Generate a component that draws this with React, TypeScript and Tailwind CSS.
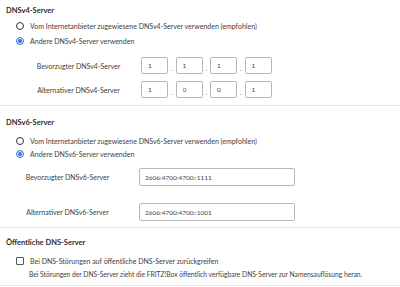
import { useState } from "react";

function Radio({ checked, label, onClick, className = "" }: { checked: boolean, label: string, onClick: () => void, className?: string }) {
  return (
    <div className={"flex flex-row items-center gap-[6px] pl-[16px] cursor-pointer " + className} onClick={onClick}>
      {checked ? (
        <span className="flex h-[8px] w-[8px] items-center justify-center rounded-full border border-[#2f7bd8] bg-[#dbe9fa]">
          <span className="h-[4px] w-[4px] rounded-full bg-[#2f7bd8]"></span>
        </span>
      ) : (
        <span className="h-[8px] w-[8px] rounded-full border border-[#333]"></span>
      )}
      <span>{label}</span>
    </div>
  )
}

function Ipv4Row({ label, values, className = "" }: { label: string, values: string[], className?: string }) {
  return (
    <div className={"flex h-[17px] flex-row items-center " + className}>
      <span className="w-[121px] ml-[18px] mr-[2px] text-center">{label}</span>
      {values.map((v, i) => (
        <div key={i} className="flex flex-row items-center">
          {i > 0 && <span className="w-[7.5px] pt-[4px] text-center text-[7px] text-[#777]">.</span>}
          <input
            className="h-[17px] w-[27px] rounded-[2px] border border-[#b8b8b8] pl-[6px] text-[6.5px] text-[#444] outline-none"
            defaultValue={v} />
        </div>
      ))}
    </div>
  )
}

function Ipv6Row({ label, value, className = "" }: { label: string, value: string, className?: string }) {
  return (
    <div className={"flex h-[18px] flex-row items-center " + className}>
      <span className="w-[135px] mr-[4px] text-center">{label}</span>
      <input
        className="h-[18px] w-[156px] rounded-[2px] border border-[#b8b8b8] pl-[5px] text-[6.5px] text-[#444] outline-none"
        defaultValue={value} />
    </div>
  )
}

export default function App() {
  const [v4Mode, setV4Mode] = useState<"isp" | "custom">("custom")
  const [v6Mode, setV6Mode] = useState<"isp" | "custom">("custom")
  const [fallback, setFallback] = useState(false)

  return (
    <div className="h-[287px] w-[400px] overflow-hidden bg-white font-['Lato',sans-serif] text-[7px] leading-[12px] text-[#3e3e3e]">
      {/* DNSv4 */}
      <div className="flex flex-col border-b border-[#e6e6e6]">
        <h2 className="mt-[5px] h-[12px] pl-[6px] text-[7.5px] font-bold text-[#2e2e2e]">DNSv4-Server</h2>
        <Radio className="mt-[2px] h-[14px]" checked={v4Mode === "isp"} onClick={() => setV4Mode("isp")}
          label="Vom Internetanbieter zugewiesene DNSv4-Server verwenden (empfohlen)" />
        <Radio className="mt-[1px] h-[14px]" checked={v4Mode === "custom"} onClick={() => setV4Mode("custom")}
          label="Andere DNSv4-Server verwenden" />
        <Ipv4Row className="mt-[9px]" label="Bevorzugter DNSv4-Server" values={["1", "1", "1", "1"]} />
        <Ipv4Row className="mt-[7px] mb-[7px]" label="Alternativer DNSv4-Server" values={["1", "0", "0", "1"]} />
      </div>

      {/* DNSv6 */}
      <div className="flex flex-col border-b border-[#e6e6e6]">
        <h2 className="mt-[11px] h-[12px] pl-[6px] text-[7.5px] font-bold text-[#2e2e2e]">DNSv6-Server</h2>
        <Radio className="mt-[5px] h-[13px]" checked={v6Mode === "isp"} onClick={() => setV6Mode("isp")}
          label="Vom Internetanbieter zugewiesene DNSv6-Server verwenden (empfohlen)" />
        <Radio className="h-[13px]" checked={v6Mode === "custom"} onClick={() => setV6Mode("custom")}
          label="Andere DNSv6-Server verwenden" />
        <Ipv6Row className="mt-[8px]" label="Bevorzugter DNSv6-Server" value="2606:4700:4700::1111" />
        <Ipv6Row className="mt-[17px] mb-[6px]" label="Alternativer DNSv6-Server" value="2606:4700:4700::1001" />
      </div>

      {/* Public DNS */}
      <div className="flex flex-col border-b border-[#e6e6e6]">
        <h2 className="mt-[9px] h-[12px] pl-[6px] text-[7.5px] font-bold text-[#2e2e2e]">Öffentliche DNS-Server</h2>
        <div className="mt-[6px] flex h-[12px] cursor-pointer flex-row items-center gap-[6px] pl-[16px]" onClick={() => setFallback(!fallback)}>
          <span className={"h-[8px] w-[8px] rounded-[1px] border border-[#555] " + (fallback ? "bg-[#2f7bd8]" : "")}></span>
          <span>Bei DNS-Störungen auf öffentliche DNS-Server zurückgreifen</span>
        </div>
        <p className="mt-[1px] mb-[5px] h-[12px] pl-[29px] text-[6.7px]">
          Bei Störungen der DNS-Server zieht die FRITZ!Box öffentlich verfügbare DNS-Server zur Namensauflösung heran.
        </p>
      </div>
    </div>
  )
}
